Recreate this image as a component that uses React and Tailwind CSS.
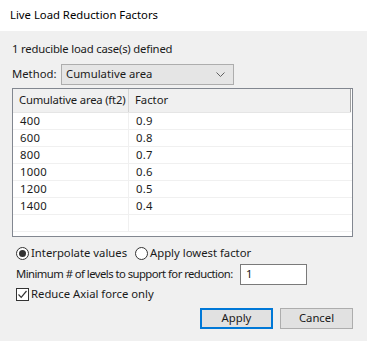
export default function App() {
  const rows = [
    ["400", "0.9"],
    ["600", "0.8"],
    ["800", "0.7"],
    ["1000", "0.6"],
    ["1200", "0.5"],
    ["1400", "0.4"],
    ["", ""],
  ];

  return (
    <div
      className="w-[367px] h-[341px] bg-[#f0f0f0] text-[11.3px] text-[#1a1a1a] flex flex-col overflow-hidden whitespace-nowrap"
      style={{ fontFamily: '"Noto Sans", "Open Sans", sans-serif' }}
    >
      {/* Title bar */}
      <div className="h-[31px] bg-white flex items-center pl-[10px] text-black">
        Live Load Reduction Factors
      </div>

      <div className="flex flex-col px-[12px]">
        <div className="mt-[10px] leading-[16px] tracking-[-0.2px]">1 reducible load case(s) defined</div>

        {/* Method */}
        <div className="mt-[7px] flex items-center h-[21px]">
          <span className="w-[49px]">Method:</span>
          <div className="w-[173px] h-[21px] bg-[#e5e5e5] border border-[#adadad] flex items-center justify-between pl-[4px] pr-[8px]">
            <span>Cumulative area</span>
            <svg width="9" height="6" viewBox="0 0 9 6" fill="none">
              <path d="M0.5 0.5 L4.5 4.5 L8.5 0.5" stroke="#606060" strokeWidth="1" />
            </svg>
          </div>
        </div>

        {/* Table */}
        <div className="mt-[3px] w-[341px] h-[149px] bg-white border border-[#828790] flex flex-col">
          <div className="flex h-[24px] bg-[#f0f0f0] border-b border-[#e5e5e5] mr-[1px]">
            <div className="w-[116px] border-r border-[#d5d5d5] flex items-center pl-[6px] tracking-[-0.2px]">
              Cumulative area (ft2)
            </div>
            <div className="flex-1 border-r border-[#a0a0a0] flex items-center pl-[6px]">Factor</div>
          </div>
          {rows.map(([a, f], i) => (
            <div key={i} className="flex h-[17px] border-b border-[#f0f0f0]">
              <div className="w-[116px] border-r border-[#f0f0f0] flex items-center pl-[7px] tracking-[0.3px]">
                {a}
              </div>
              <div className="flex-1 flex items-center pl-[7px] tracking-[0.3px]">{f}</div>
            </div>
          ))}
        </div>

        {/* Radios */}
        <div className="mt-[8px] flex items-center h-[16px] pl-[4px]">
          <span className="w-[13px] h-[13px] rounded-full border border-[#333] flex items-center justify-center bg-white">
            <span className="w-[7px] h-[7px] rounded-full bg-[#333]" />
          </span>
          <span className="ml-[2px] w-[104px]">Interpolate values</span>
          <span className="w-[13px] h-[13px] rounded-full border border-[#333] bg-white" />
          <span className="ml-[2px]">Apply lowest factor</span>
        </div>

        {/* Minimum levels */}
        <div className="mt-[3px] flex items-center h-[21px] pl-[4px]">
          <span className="w-[224px] shrink-0 tracking-[-0.55px]">
            Minimum # of levels to support for reduction:
          </span>
          <div className="w-[67px] shrink-0 h-[21px] bg-white border border-[#7a7a7a] flex items-center pl-[5px]">
            1
          </div>
        </div>

        {/* Checkbox */}
        <div className="mt-[1px] flex items-center h-[16px] pl-[4px]">
          <span className="w-[13px] h-[13px] border border-[#333] bg-white flex items-center justify-center">
            <svg width="11" height="11" viewBox="0 0 11 11" fill="none">
              <path d="M1.5 5.5 L4.2 8.3 L9.5 2" stroke="#333" strokeWidth="1.2" />
            </svg>
          </span>
          <span className="ml-[2px]">Reduce Axial force only</span>
        </div>

        {/* Buttons */}
        <div className="mt-[6px] flex justify-end gap-[7px] pr-[2px]">
          <button className="w-[73px] h-[21px] bg-[#e1e1e1] border-2 border-[#0078d7] flex items-center justify-center">
            Apply
          </button>
          <button className="w-[73px] h-[21px] bg-[#e1e1e1] border border-[#adadad] flex items-center justify-center">
            Cancel
          </button>
        </div>
      </div>
    </div>
  );
}
